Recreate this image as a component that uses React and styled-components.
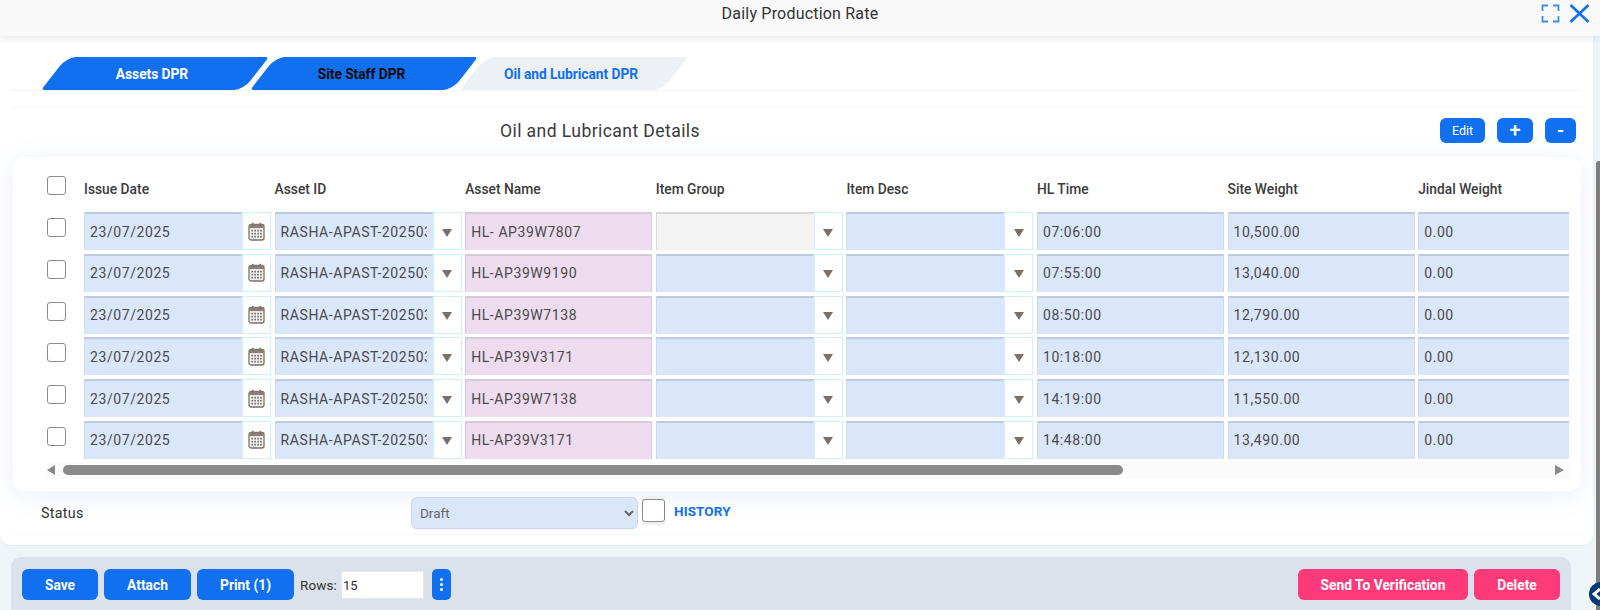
import React from "react";
import styled, { createGlobalStyle } from "styled-components";

const Global = createGlobalStyle`
  html, body { margin: 0; padding: 0; height: 610px; overflow: hidden; background: #eef4f8; font-family: Roboto, "Liberation Sans", sans-serif; }
  * { box-sizing: border-box; }
`;
const Page = styled.div`position: relative; width: 1600px; height: 610px; overflow: hidden;`;
const Header = styled.header`
  position: relative; z-index: 2; height: 36px; background: #f9f9f9; box-shadow: 0 3px 8px rgba(0,0,0,.09);
  display: flex; align-items: center; justify-content: center;
`;
const HeaderTitle = styled.div`font-size: 16px; color: #333; letter-spacing: .2px; margin-top: -9px;`;
const HeaderIcons = styled.div`position: absolute; right: 10px; top: 4px; display: flex; gap: 9px; align-items: center;`;
const Panel = styled.main`width: 1593px; height: 509px; background: #fff; border-radius: 0 0 10px 10px; padding-top: 21px; box-shadow: 0 1px 2px rgba(0,0,0,.04);`;
const TabBar = styled.nav`display: flex; gap: 7.5px; height: 34px; margin: 0 12px 0 13px; padding-left: 40.5px; border-bottom: 1px solid #f3f3f3;`;
const Tab = styled.div`
  position: relative; width: 202px; height: 33px; display: flex; align-items: center; justify-content: center;
  font-size: 13.8px; font-weight: 700; padding-right: 5px; letter-spacing: -.05px;
  color: ${p => p.$color};
  &::before {
    content: ""; position: absolute; inset: 0; z-index: 0; background: ${p => p.$bg};
    transform: skewX(-38deg); border-radius: 9px 3px 9px 3px;
  }
  span { position: relative; z-index: 1; }
`;
const TitleRow = styled.section`
  margin: 16px 11px 0 13px; height: 50px; border-top: 1px solid #f3f3f3;
  display: flex; align-items: flex-start; padding: 10px 6px 0 487px;
`;
const Title = styled.h2`margin: 3px 0 0; font-size: 17.6px; font-weight: 400; color: #3a3a3a; letter-spacing: .4px; flex: 1;`;
const ActionGroup = styled.div`display: flex; gap: 12px;`;
const SmallBtn = styled.button`
  height: 25px; width: ${p => p.$w}px; border: 0; border-radius: 6px; background: #1170ef; color: #fff;
  font-family: inherit; font-size: ${p => p.$fs || 13}px; font-weight: ${p => p.$fw || 400}; padding: 0; line-height: 25px;
`;
const Card = styled.section`
  margin: 0 12px 0 13px; height: 334px; background: #fff; border-radius: 12px;
  box-shadow: 0 4px 26px rgba(90,130,240,.13); padding: 19px 12px 0 34px;
`;
const TableClip = styled.div`overflow: hidden;`;
const HeadRow = styled.div`display: flex; height: 36px; width: 1700px;`;
const Row = styled.div`display: flex; height: 38px; margin-bottom: 3.8px; width: 1700px;`;
const CheckCol = styled.div`width: 37px; flex: none; padding-top: ${p => p.$top || 0}px;`;
const Check = styled.input.attrs({ type: "checkbox" })`
  appearance: none; display: block; margin: 0; width: 19px; height: 19px; background: #fff;
  border: 1.5px solid #8c8c8c; border-radius: 3px;
`;
const HeadCell = styled.div`width: 190.6px; flex: none; font-size: 13.8px; font-weight: 500; color: #3b3b3b; padding-top: 5px;`;
const Cell = styled.div`width: 187px; margin-right: 3.6px; flex: none; display: flex; height: 38px;`;
const Field = styled.div`
  flex: 1; min-width: 0; height: 38px; padding: 0 5px 1px; display: flex; align-items: center; overflow: hidden; white-space: nowrap;
  background: ${p => p.$bg || "#dae7fb"}; color: #4a4a4a; font-size: 14px; letter-spacing: .58px;
  border-top: 2px solid ${p => p.$edge || "#bccadf"}; border-left: 1px solid ${p => p.$edge || "#cfdaeb"};
  border-right: 1px solid ${p => p.$joined ? "transparent" : (p.$edge || "#cfdaeb")};
`;
const ClipText = styled.span`display: block; width: 146px; overflow: hidden;`;
const AddOn = styled.div`
  flex: none; width: 29px; height: 38px; background: #fff; border: 1.5px solid #cdf1f6;
  display: flex; align-items: center; justify-content: center; padding-top: ${p => p.$pad}px;
`;
const Caret = styled.i`display: block; width: 0; height: 0; border-left: 5.5px solid transparent; border-right: 5.5px solid transparent; border-top: 8.5px solid #7a7068;`;
const ScrollTrack = styled.div`display: flex; align-items: center; height: 17px; background: #fbfbfb; margin-top: -1px; width: 100%;`;
const ArrowL = styled.i`display: block; margin-right: 8px; width: 0; height: 0; border-top: 5.5px solid transparent; border-bottom: 5.5px solid transparent; border-right: 8px solid #8a8a8a;`;
const Thumb = styled.div`width: 1060px; height: 10px; border-radius: 5px; background: #8a8a8a;`;
const ArrowR = styled.i`display: block; margin-left: auto; margin-right: 5px; width: 0; height: 0; border-top: 5.5px solid transparent; border-bottom: 5.5px solid transparent; border-left: 9px solid #8a8a8a;`;
const StatusRow = styled.section`
  margin: 0 11px 0 13px; height: 44px; border-bottom: 1px solid #f7f7f7; display: flex; align-items: flex-start; padding: 6px 0 0 28px;
`;
const StatusLabel = styled.label`width: 370px; font-size: 14.3px; color: #333; letter-spacing: .3px; padding-top: 8px;`;
const StatusSelect = styled.select`
  width: 227px; height: 32px; border: 1px solid #c9d7ec; border-radius: 6px; background: #dae7fb; color: #666;
  font-family: inherit; font-size: 13.5px; padding: 0 4px;
`;
const HistCheckBox = styled.div`margin: -1px 0 0 4px; padding: 3px 0; background: #f0f0f0; width: 23px;`;
const HistCheck = styled(Check)`width: 23px; height: 23px; border-radius: 3px; border-color: #888;`;
const History = styled.a`margin: 6px 0 0 9px; font-size: 13.5px; font-weight: 700; color: #1170ef; letter-spacing: .1px;`;
const Footer = styled.footer`
  margin: 12px 0 0 11px; width: 1560px; height: 70px; background: #dbe2ec; border-radius: 10px 10px 0 0;
  display: flex; align-items: flex-start; padding: 12px 11px 0 11px;
`;
const FootBtn = styled.button`
  height: 31px; width: ${p => p.$w}px; margin-right: ${p => p.$mr ?? 6}px; border: 0; border-radius: 6px; background: ${p => p.$pink ? "#fe3a7b" : "#1170ef"};
  color: #fff; font-family: inherit; font-weight: 700; font-size: 13.8px; padding: 0;
`;
const RowsLabel = styled.span`font-size: 13.5px; color: #333; margin: 8px 4px 0 0; letter-spacing: .1px;`;
const RowsInput = styled.input`
  width: 83px; height: 28px; margin: 2px 8px 0 0; border: 1px solid #e6e6e6; background: #fff; padding: 0 1px;
  font-family: inherit; font-size: 13px; color: #333;
`;
const DotsBtn = styled.button`
  width: 19px; height: 31px; border: 0; border-radius: 5px; background: #1170ef; padding: 0; display: flex; flex-direction: column; gap: 2px; align-items: center; justify-content: center;
  i { display: block; width: 3px; height: 3px; border-radius: 50%; background: #fff; }
`;
const Spacer = styled.div`flex: 1;`;
const VScroll = styled.div`position: absolute; right: 0; top: 161px; width: 4.5px; height: 449px; background: #7d7d7d; border-radius: 3px 0 0 0;`;
const Bubble = styled.div`position: absolute; left: 1589px; top: 582px; width: 24px; height: 24px; border-radius: 50%; background: #013a74; display: flex; align-items: center; padding-left: 3px;`;

const CalendarIcon = () => (
  <svg width="17" height="19" viewBox="0 0 17 19">
    <rect x="1" y="2.5" width="15" height="15.5" rx="2" fill="#f4f2f0" stroke="#7a7068" strokeWidth="1.3" />
    <rect x="1" y="2.5" width="15" height="3.6" fill="#8a8078" />
    <rect x="4" y="0.8" width="1.5" height="3" fill="#7a7068" />
    <rect x="11.5" y="0.8" width="1.5" height="3" fill="#7a7068" />
    {[7.8, 10.8, 13.8].map(y => [3.4, 6.3, 9.2, 12.1].map(x => (
      <rect key={x + "-" + y} x={x} y={y} width="1.7" height="1.7" fill="#7a7068" />
    )))}
  </svg>
);
const ExpandIcon = () => (
  <svg width="19" height="19" viewBox="0 0 19 19" fill="none" stroke="#3b8df2" strokeWidth="1.8">
    <path d="M7 1.5H1.5V7M12 1.5h5.5V7M1.5 12v5.5H7M17.5 12v5.5H12" />
  </svg>
);
const CloseIcon = () => (
  <svg width="21" height="19" viewBox="0 0 21 19" fill="none" stroke="#1170ef" strokeWidth="2.6">
    <path d="M1.5 1L19.5 18M19.5 1L1.5 18" />
  </svg>
);

const rows = [
  { name: "HL- AP39W7807", time: "07:06:00", site: "10,500.00", off: true },
  { name: "HL-AP39W9190", time: "07:55:00", site: "13,040.00" },
  { name: "HL-AP39W7138", time: "08:50:00", site: "12,790.00" },
  { name: "HL-AP39V3171", time: "10:18:00", site: "12,130.00" },
  { name: "HL-AP39W7138", time: "14:19:00", site: "11,550.00" },
  { name: "HL-AP39V3171", time: "14:48:00", site: "13,490.00" },
];
const heads = ["Issue Date", "Asset ID", "Asset Name", "Item Group", "Item Desc", "HL Time", "Site Weight", "Jindal Weight"];

export default function App() {
  return (
    <Page>
      <Global />
      <Header>
        <HeaderTitle>Daily Production Rate</HeaderTitle>
        <HeaderIcons><ExpandIcon /><CloseIcon /></HeaderIcons>
      </Header>
      <Panel>
        <TabBar>
          <Tab $bg="#1170ef" $color="#fff"><span>Assets DPR</span></Tab>
          <Tab $bg="#1170ef" $color="#0a0a0a"><span>Site Staff DPR</span></Tab>
          <Tab $bg="#edf0f5" $color="#1170ef"><span>Oil and Lubricant DPR</span></Tab>
        </TabBar>
        <TitleRow>
          <Title>Oil and Lubricant Details</Title>
          <ActionGroup>
            <SmallBtn $w={45} $fs={12.5}>Edit</SmallBtn>
            <SmallBtn $w={36} $fs={20} $fw={500}>+</SmallBtn>
            <SmallBtn $w={31} $fs={18} $fw={700}>-</SmallBtn>
          </ActionGroup>
        </TitleRow>
        <Card>
          <TableClip>
            <HeadRow>
              <CheckCol><Check /></CheckCol>
              {heads.map(h => <HeadCell key={h}>{h}</HeadCell>)}
            </HeadRow>
            {rows.map((r, i) => (
              <Row key={i}>
                <CheckCol $top={6}><Check /></CheckCol>
                <Cell><Field $joined>23/07/2025</Field><AddOn $pad={0}><CalendarIcon /></AddOn></Cell>
                <Cell><Field $joined><ClipText>RASHA-APAST-202503</ClipText></Field><AddOn $pad={3}><Caret /></AddOn></Cell>
                <Cell><Field $bg="#eddcee" $edge="#d8c8dc">{r.name}</Field></Cell>
                <Cell><Field $joined $bg={r.off ? "#f3f3f3" : undefined} $edge={r.off ? "#d8d8d8" : undefined} /><AddOn $pad={3}><Caret /></AddOn></Cell>
                <Cell><Field $joined /><AddOn $pad={3}><Caret /></AddOn></Cell>
                <Cell><Field>{r.time}</Field></Cell>
                <Cell><Field>{r.site}</Field></Cell>
                <Cell><Field>0.00</Field></Cell>
              </Row>
            ))}
          </TableClip>
          <ScrollTrack>
            <ArrowL /><Thumb /><ArrowR />
          </ScrollTrack>
        </Card>
        <StatusRow>
          <StatusLabel>Status</StatusLabel>
          <StatusSelect defaultValue="Draft"><option>Draft</option></StatusSelect>
          <HistCheckBox><HistCheck /></HistCheckBox>
          <History>HISTORY</History>
        </StatusRow>
      </Panel>
      <Footer>
        <FootBtn $w={76}>Save</FootBtn>
        <FootBtn $w={87}>Attach</FootBtn>
        <FootBtn $w={97}>Print (1)</FootBtn>
        <RowsLabel>Rows:</RowsLabel>
        <RowsInput defaultValue="15" />
        <DotsBtn><i /><i /><i /></DotsBtn>
        <Spacer />
        <FootBtn $pink $w={170}>Send To Verification</FootBtn>
        <FootBtn $pink $w={86} $mr={0}>Delete</FootBtn>
      </Footer>
      <VScroll />
      <Bubble>
        <svg width="9" height="12" viewBox="0 0 9 12"><path d="M8 1L2 6l6 5" fill="none" stroke="#fff" strokeWidth="3" /></svg>
      </Bubble>
    </Page>
  );
}
